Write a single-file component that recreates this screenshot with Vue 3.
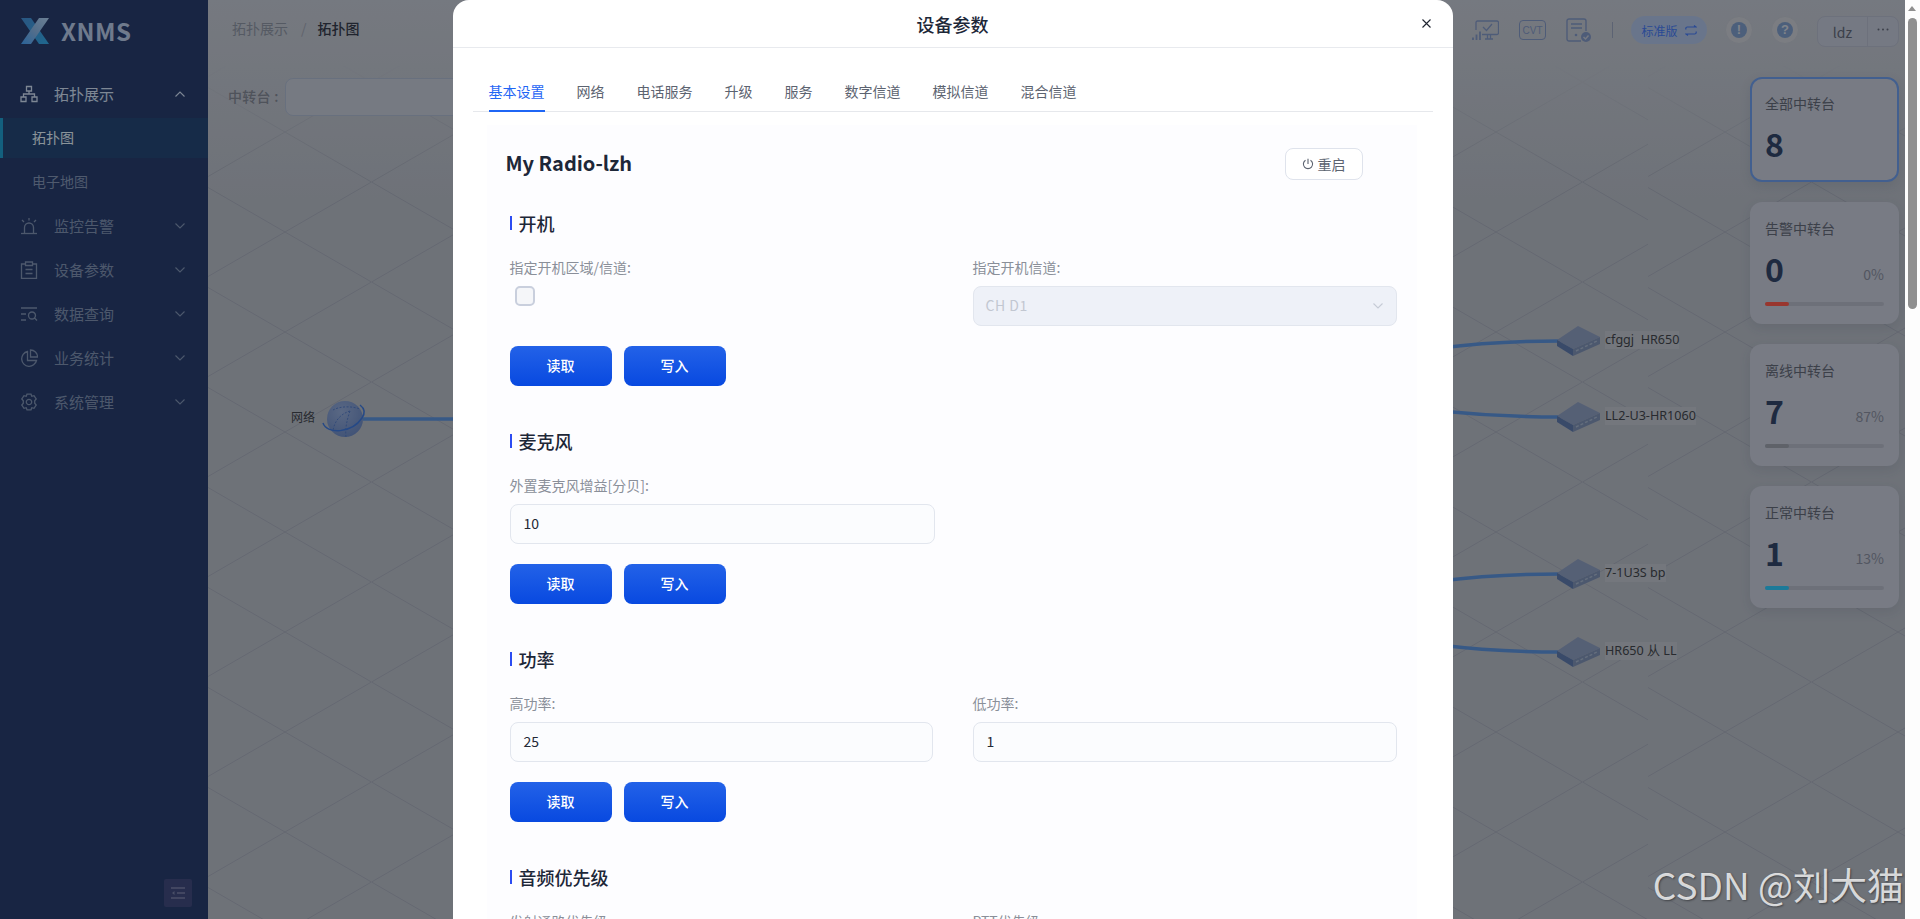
<template>
  <div class="app">
    <div class="page">
      <aside class="sidebar">
        <div class="logo">
          <svg width="28" height="26" viewBox="0 0 28 26">
            <defs>
              <linearGradient id="logoA" x1="0" y1="0" x2="1" y2="1">
                <stop offset="0" stop-color="#4690d8" />
                <stop offset="1" stop-color="#35adee" />
              </linearGradient>
              <linearGradient id="logoB" x1="1" y1="0" x2="0" y2="1">
                <stop offset="0" stop-color="#b2d4f7" />
                <stop offset="0.5" stop-color="#8ab8e8" />
                <stop offset="1" stop-color="#46a5ff" />
              </linearGradient>
            </defs>
            <polygon points="0,0 10,0 28,26 18,26" fill="url(#logoA)" />
            <polygon points="18,0 28,0 10,26 0,26" fill="url(#logoB)" />
          </svg>
          <span class="logo-text">XNMS</span>
        </div>
        <nav class="menu">
          <template v-for="item in menu" :key="item.name">
            <div :class="['menu-item', item.open ? 'open' : '']">
              <svg class="menu-icon" width="18" height="18" viewBox="0 0 18 18" fill="none" stroke="currentColor" stroke-width="1.3">
                <path v-for="(d, i) in item.icon" :key="i" :d="d" />
              </svg>
              <span class="menu-name">{{ item.name }}</span>
              <svg class="chevron" width="10" height="6" viewBox="0 0 10 6" fill="none" stroke="currentColor" stroke-width="1.1">
                <path :d="item.open ? 'M0.5 5.5L5 1L9.5 5.5' : 'M0.5 0.5L5 5L9.5 0.5'" />
              </svg>
            </div>
            <template v-if="item.children">
              <div
                v-for="sub in item.children"
                :key="sub.name"
                :class="['sub-item', sub.active ? 'active' : '']"
              >
                {{ sub.name }}
              </div>
            </template>
          </template>
        </nav>
        <div class="collapse-btn">
          <svg width="14" height="12" viewBox="0 0 14 12" fill="none" stroke="currentColor" stroke-width="1.4">
            <path d="M0 1H14M6 6H14M0 11H14" />
            <path d="M3.5 4L1 6L3.5 8Z" fill="currentColor" stroke="none" />
          </svg>
        </div>
      </aside>

      <main class="main">
        <svg class="canvas" width="1697" height="919" viewBox="208 0 1697 919">
          <defs>
            <pattern id="gridA" patternUnits="userSpaceOnUse" x="285" y="182" width="173" height="100">
              <path d="M0 50L86.5 0L173 50L86.5 100Z" fill="none" stroke="#a8aebd" stroke-width="1" />
            </pattern>
            <pattern id="gridB" patternUnits="userSpaceOnUse" x="1725" y="182" width="173" height="100">
              <path d="M0 50L86.5 0L173 50L86.5 100Z" fill="none" stroke="#a8aebd" stroke-width="1" />
            </pattern>
            <linearGradient id="gridFade" x1="0" y1="0" x2="0" y2="1">
              <stop offset="0.07" stop-color="#fff" stop-opacity="0" />
              <stop offset="0.2" stop-color="#fff" stop-opacity="1" />
            </linearGradient>
            <mask id="gridMask">
              <rect x="208" y="0" width="1697" height="919" fill="url(#gridFade)" />
            </mask>
            <radialGradient id="globeFill" cx="0.4" cy="0.3" r="0.8">
              <stop offset="0" stop-color="#96aedc" />
              <stop offset="1" stop-color="#6a88c4" />
            </radialGradient>
          </defs>
          <g mask="url(#gridMask)">
            <rect x="208" y="0" width="1440" height="919" fill="url(#gridA)" />
            <rect x="1648" y="0" width="257" height="919" fill="url(#gridB)" />
          </g>

          <path d="M363 419H460" fill="none" stroke="#5c94e0" stroke-width="3.5" />
          <path
            v-for="link in links"
            :key="link"
            :d="link"
            fill="none"
            stroke="#5c94e0"
            stroke-width="3.5"
          />

          <g>
            <circle cx="345" cy="419" r="18" fill="url(#globeFill)" />
            <path d="M333 410C340 406 352 406 360 409M350 411C347 420 345 428 346 437M350 411C340 414 334 422 333 431" fill="none" stroke="#4f78c8" stroke-width="0.9" stroke-dasharray="2 1.5" />
            <path d="M323 423C327 435 352 433 362 418C366 412 364 408 360 405" fill="none" stroke="#3f7ae0" stroke-width="1.5" />
          </g>

          <g v-for="node in nodes" :key="node.name" :transform="`translate(0 ${node.y - 341})`">
            <polygon points="1557,340 1578,326 1600,337 1573,349" fill="#8ea0c4" />
            <polygon points="1573,349 1600,337 1600,344 1573,356" fill="#7f93b8" />
            <polygon points="1557,340 1573,349 1573,356 1557,346" fill="#5f7cb0" />
            <path d="M1576 351L1597 341" stroke="#a8b8d0" stroke-width="1.4" stroke-dasharray="3 2" />
          </g>
        </svg>

        <span class="node-label net-label">网络</span>
        <span
          v-for="node in nodes"
          :key="node.name"
          class="node-label"
          :style="{ top: node.y - 10 + 'px' }"
        >{{ node.name }}</span>

        <header class="topbar">
          <div class="crumbs">
            <span class="crumb">拓扑展示</span>
            <span class="crumb-sep">/</span>
            <span class="crumb current">拓扑图</span>
          </div>
          <div class="tools">
            <svg class="tool tool-monitor" width="27" height="21" viewBox="0 0 27 21" fill="none" stroke="currentColor" stroke-width="1.3">
              <path d="M4 10V2.5A1.5 1.5 0 0 1 5.5 1H25A1.5 1.5 0 0 1 26.500 2.500V13A1.5 1.500 0 0 1 25 14.500H10" />
              <path d="M11 7L14.500 10.500L20 4M13 19H21M15.500 15V19M18.500 15V19" />
              <path d="M1 17.500V20M4.500 14.500V20M8 11.500V20" stroke-width="1.800" />
            </svg>
            <div class="tool tool-cvt">CVT</div>
            <svg class="tool tool-doc" width="26" height="24" viewBox="0 0 26 24" fill="none" stroke="currentColor" stroke-width="1.4">
              <path d="M15 23H3A2 2 0 0 1 1 21V3A2 2 0 0 1 3 1H18A2 2 0 0 1 20 3V13" />
              <path d="M5 6H16M5 10H16" />
              <circle cx="10" cy="17" r="1.300" fill="currentColor" stroke="none" />
              <circle cx="20" cy="19" r="5" fill="currentColor" stroke="none" />
              <path d="M17.500 19L19.500 21L22.500 17.500" stroke="#c5ccd9" />
            </svg>
            <span class="tool-divider"></span>
            <div class="edition">
              <span>标准版</span>
              <svg width="12" height="11" viewBox="0 0 12 11" fill="none" stroke="currentColor" stroke-width="1.2">
                <path d="M0.800 4.500V3.500A1.500 1.500 0 0 1 2.300 2H11L9 0.500M11.200 6.500V7.500A1.500 1.500 0 0 1 9.700 9H1L3 10.500" />
              </svg>
            </div>
            <div class="round-btn"><span class="round-inner">!</span></div>
            <div class="round-btn"><span class="round-inner">?</span></div>
            <div class="user-group">
              <span class="user-name">ldz</span>
              <span class="user-more">
                <svg width="12" height="3" viewBox="0 0 12 3" fill="currentColor">
                  <circle cx="1.500" cy="1.500" r="1" />
                  <circle cx="6" cy="1.500" r="1" />
                  <circle cx="10.500" cy="1.500" r="1" />
                </svg>
              </span>
            </div>
          </div>
        </header>

        <div class="content">
          <div class="filter">
            <span class="filter-label">中转台 :</span>
            <div class="filter-input"></div>
          </div>
          <div class="stats">
            <div
              v-for="stat in stats"
              :key="stat.title"
              :class="['stat-card', stat.active ? 'active' : '']"
            >
              <div class="stat-title">{{ stat.title }}</div>
              <div class="stat-row">
                <span class="stat-num">{{ stat.count }}</span>
                <span v-if="stat.percent" class="stat-percent">{{ stat.percent }}</span>
              </div>
              <div v-if="stat.color" class="stat-track">
                <div class="stat-fill" :style="{ background: stat.color }"></div>
              </div>
            </div>
          </div>
        </div>
      </main>

      <div class="mask">
        <div class="modal">
          <div class="modal-head">
            <span class="modal-title">设备参数</span>
            <svg class="modal-close" width="9" height="9" viewBox="0 0 9 9" fill="none" stroke="#1f2430" stroke-width="1.100">
              <path d="M0.500 0.500L8.500 8.500M8.500 0.500L0.500 8.500" />
            </svg>
          </div>
          <div class="tabs">
            <span
              v-for="(tab, i) in tabs"
              :key="tab"
              :class="['tab', i === 0 ? 'active' : '']"
            >{{ tab }}</span>
          </div>
          <div class="panel">
            <div class="panel-head">
              <span class="device-name">My Radio-lzh</span>
              <button class="restart">
                <svg width="12" height="12" viewBox="0 0 12 12" fill="none" stroke="currentColor" stroke-width="1.100">
                  <path d="M6 0.800V6M3.500 2.200A4.600 4.600 0 1 0 8.500 2.200" />
                </svg>
                重启
              </button>
            </div>
            <section v-for="section in sections" :key="section.title" class="section">
              <div class="section-title"><i class="section-bar"></i>{{ section.title }}</div>
              <div class="fields">
                <div
                  v-for="field in section.fields"
                  :key="field.label"
                  :class="['field', field.wide ? 'wide' : '']"
                >
                  <div class="field-label">{{ field.label }}</div>
                  <div v-if="field.type === 'check'" class="check-wrap">
                    <span class="check"></span>
                  </div>
                  <div v-else-if="field.type === 'select'" class="box disabled">
                    <span class="box-text">{{ field.value }}</span>
                    <svg width="10" height="6" viewBox="0 0 10 6" fill="none" stroke="#c6cbd6" stroke-width="1.100">
                      <path d="M0.500 0.500L5 5L9.500 0.500" />
                    </svg>
                  </div>
                  <div v-else class="box"><span class="box-text">{{ field.value }}</span></div>
                </div>
              </div>
              <div class="actions">
                <button class="primary">读取</button>
                <button class="primary">写入</button>
              </div>
            </section>
          </div>
        </div>
      </div>

      <span class="watermark">CSDN @刘大猫</span>
    </div>

    <div class="scrollbar">
      <i class="scroll-arrow"></i>
      <i class="scroll-thumb"></i>
    </div>
  </div>
</template>

<script setup>
const menu = [
  {
    name: "拓扑展示",
    open: true,
    icon: ["M6.500 1.500H11.500V6H6.500Z", "M1 12H6V16.500H1Z", "M12 12H17V16.500H12Z", "M3.500 12V9H14.500V12M9 6V9"],
    children: [{ name: "拓扑图", active: true }, { name: "电子地图" }],
  },
  {
    name: "监控告警",
    icon: ["M4.500 16V10.500A4.500 4.500 0 0 1 13.500 10.500V16", "M1 16.500H17", "M9 1V3.500M2 3L4 5M16 3L14 5"],
  },
  {
    name: "设备参数",
    icon: ["M5 3H1.500V17.500H16.500V3H13", "M5.500 1H12.500V4.500H5.500Z", "M5.500 8.500H12.500M5.500 12.500H12.500"],
  },
  {
    name: "数据查询",
    icon: ["M1 3H17M1 9H6M1 15H6", "M8.500 10.500A3.500 3.500 0 1 0 15.500 10.500A3.500 3.500 0 1 0 8.500 10.500ZM14.500 13L17 15.500"],
  },
  {
    name: "业务统计",
    icon: ["M7.500 2.500A7.500 7.500 0 1 0 16.500 11.500H7.500Z", "M10.500 1V8H17.500A7 7 0 0 0 10.500 1Z"],
  },
  {
    name: "系统管理",
    icon: [
      "M7 1.200H11L11.800 3.300L14 2.700L16.200 6L14.700 7.700V10.300L16.200 12L14 15.300L11.800 14.700L11 16.800H7L6.200 14.700L4 15.300L1.800 12L3.300 10.300V7.700L1.800 6L4 2.700L6.200 3.300Z",
      "M9 6.300A2.700 2.700 0 1 0 9 11.700A2.700 2.700 0 1 0 9 6.300Z",
    ],
  },
];

const nodes = [
  { name: "cfggj  HR650", y: 341 },
  { name: "LL2-U3-HR1060", y: 417 },
  { name: "7-1U3S bp", y: 574 },
  { name: "HR650 从 LL", y: 652 },
];

const links = [
  "M1440 348C1480 343 1520 341 1560 341",
  "M1440 411C1480 415 1520 417 1560 417",
  "M1440 581C1480 576 1520 574 1560 574",
  "M1440 645C1480 650 1520 652 1560 652",
];

const stats = [
  { title: "全部中转台", count: 8, active: true },
  { title: "告警中转台", count: 0, percent: "0%", color: "#ff5a4d" },
  { title: "离线中转台", count: 7, percent: "87%", color: "#9ea3af" },
  { title: "正常中转台", count: 1, percent: "13%", color: "#30cbff" },
];

const tabs = ["基本设置", "网络", "电话服务", "升级", "服务", "数字信道", "模拟信道", "混合信道"];

const sections = [
  {
    title: "开机",
    fields: [
      { label: "指定开机区域/信道:", type: "check" },
      { label: "指定开机信道:", type: "select", value: "CH D1" },
    ],
  },
  {
    title: "麦克风",
    fields: [{ label: "外置麦克风增益[分贝]:", type: "input", value: "10", wide: true }],
  },
  {
    title: "功率",
    fields: [
      { label: "高功率:", type: "input", value: "25" },
      { label: "低功率:", type: "input", value: "1" },
    ],
  },
  {
    title: "音频优先级",
    fields: [
      { label: "发射通路优先级:", type: "input", value: "" },
      { label: "PTT优先级:", type: "input", value: "" },
    ],
  },
];
</script>

<style>
html,
body {
  margin: 0;
  height: 100%;
  overflow: hidden;
}
</style>

<style scoped>
* {
  box-sizing: border-box;
}

.app {
  display: flex;
  height: 919px;
  overflow: hidden;
  font-family: "Noto Sans CJK SC", "Noto Sans", sans-serif;
}

.page {
  position: relative;
  flex: 1;
  display: flex;
  min-width: 0;
  overflow: hidden;
}

.sidebar {
  position: relative;
  flex: 0 0 208px;
  background: #283f71;
}

.logo {
  display: flex;
  align-items: center;
  height: 62px;
  padding-left: 21px;
  gap: 12px;
}

.logo-text {
  font-size: 24px;
  font-weight: 700;
  letter-spacing: 0.5px;
  color: #b9cbe9;
  margin-bottom: 1px;
}

.menu {
  padding-top: 10px;
}

.menu-item {
  display: flex;
  align-items: center;
  height: 44px;
  padding-left: 20px;
  color: #8093b4;
  font-size: 15px;
}

.menu-item.open {
  color: #d2e1f7;
}

.menu-icon {
  flex: none;
}

.menu-name {
  margin-left: 16px;
  margin-bottom: 2px;
  flex: 1;
}

.chevron {
  margin-right: 23px;
}

.sub-item {
  display: flex;
  align-items: center;
  height: 44px;
  padding-left: 32px;
  padding-bottom: 2px;
  font-size: 14px;
  color: #8496b7;
}

.sub-item.active {
  height: 40px;
  margin: 2px 0;
  background: #264878;
  border-left: 3px solid #21a0d2;
  padding-left: 29px;
  color: #e6f7ff;
}

.collapse-btn {
  position: absolute;
  left: 164px;
  top: 879px;
  width: 28px;
  height: 28px;
  display: flex;
  align-items: center;
  justify-content: center;
  border-radius: 2px;
  background: #414b80;
  color: #7d85ad;
}

.main {
  position: relative;
  flex: 1;
  min-width: 0;
  background: linear-gradient(#c4cad5, #b8bec9 200px);
}

.canvas {
  position: absolute;
  left: 0;
  top: 0;
}

.node-label {
  position: absolute;
  left: 1397px;
  font-family: "Noto Sans", sans-serif;
  font-size: 12.600px;
  line-height: 18px;
  white-space: pre;
  color: #43474f;
  background: #c2c7d0;
}

.net-label {
  left: 83px;
  top: 408px;
  background: none;
  font-family: "Noto Sans CJK SC", sans-serif;
  font-size: 12px;
}

.topbar {
  position: relative;
  display: flex;
  align-items: center;
  justify-content: space-between;
  height: 60px;
  padding: 0 6px 0 24px;
}

.crumbs {
  display: flex;
  align-items: center;
  font-size: 14px;
  margin-top: -5px;
}

.crumb {
  color: #8e96a5;
}

.crumb.current {
  color: #363c4d;
  font-weight: 500;
}

.crumb-sep {
  margin: 0 11px 0 13px;
  color: #a0a6b4;
}

.tools {
  display: flex;
  align-items: center;
  gap: 18px;
  color: #8399c8;
}

.tool {
  flex: none;
  margin-right: 2px;
}

.tool-cvt {
  display: flex;
  align-items: center;
  justify-content: center;
  width: 27px;
  height: 20px;
  border: 1.5px solid currentColor;
  border-radius: 4px;
  font-family: "Liberation Sans", sans-serif;
  font-size: 10px;
}

.tool-divider {
  width: 1px;
  height: 16px;
  background: #9aa6c0;
}

.edition {
  display: flex;
  align-items: center;
  justify-content: center;
  gap: 7px;
  width: 76px;
  height: 28px;
  border-radius: 14px;
  background: #b0c4e8;
  color: #467bf7;
  font-size: 12px;
}

.round-btn {
  display: flex;
  align-items: center;
  justify-content: center;
  width: 28px;
  height: 28px;
  border-radius: 50%;
  background: #cdd1d9;
  border: 1px solid #c2c7d2;
}

.round-inner {
  width: 16px;
  height: 16px;
  border-radius: 50%;
  background: #7f9fce;
  color: #d5dbe6;
  font-family: "Liberation Sans", sans-serif;
  font-size: 13px;
  font-weight: 700;
  line-height: 16px;
  text-align: center;
}

.user-group {
  display: flex;
  height: 31px;
  width: 82px;
  margin-top: 2px;
  border: 1px solid #b6bccf;
  border-radius: 8px;
  background: #c3cada;
  color: #646b7c;
}

.user-name {
  flex: 0 0 50px;
  border-right: 1px solid #b6bccf;
  text-align: center;
  font-size: 14px;
  line-height: 31px;
}

.user-more {
  flex: 1;
  display: flex;
  align-items: center;
  justify-content: center;
  padding-bottom: 4px;
}

.content {
  position: relative;
  display: flex;
  justify-content: space-between;
  padding: 17px 6px 0 20px;
}

.filter {
  display: flex;
  align-items: flex-start;
  margin-top: 1px;
}

.filter-label {
  font-size: 14px;
  font-weight: 500;
  line-height: 36px;
  color: #848a98;
  letter-spacing: 0.3px;
}

.filter-input {
  width: 300px;
  height: 38px;
  margin-left: 6px;
  border: 1px solid #aebbd2;
  border-radius: 8px;
  background: #c5ccd9;
}

.stats {
  display: flex;
  flex-direction: column;
  gap: 20px;
  width: 149px;
}

.stat-card {
  padding: 15px 13px 16px;
  border: 2px solid transparent;
  border-radius: 12px;
  background: #c8cddc;
  box-shadow: 0 4px 12px rgba(60, 70, 100, 0.12);
}

.stat-card.active {
  border-color: #6f9fee;
  padding-bottom: 17px;
}

.stat-title {
  height: 20px;
  font-size: 14px;
  line-height: 18px;
  color: #656b7a;
}

.stat-row {
  display: flex;
  align-items: flex-start;
  justify-content: space-between;
  margin-top: 13px;
  height: 36px;
}

.stat-num {
  font-size: 32px;
  font-weight: 700;
  line-height: 32px;
  color: #32466b;
}

.stat-percent {
  font-size: 14px;
  line-height: 28px;
  margin-top: 8px;
  color: #8a90a2;
}

.stat-track {
  height: 4px;
  margin-top: 14px;
  border-radius: 2px;
  background: #b6bbca;
}

.stat-fill {
  width: 24px;
  height: 4px;
  border-radius: 2px;
}

.mask {
  position: absolute;
  inset: 0;
  display: flex;
  justify-content: center;
  background: rgba(0, 0, 0, 0.4);
}

.modal {
  flex: 0 0 1000px;
  height: 1200px;
  border-radius: 16px 16px 0 0;
  background: #fff;
}

.modal-head {
  position: relative;
  height: 48px;
  border-bottom: 1px solid #e8eaee;
  text-align: center;
}

.modal-title {
  font-size: 18px;
  font-weight: 500;
  line-height: 48px;
  color: #1d2738;
}

.modal-close {
  position: absolute;
  right: 22px;
  top: 19px;
}

.tabs {
  display: flex;
  gap: 32px;
  height: 40px;
  margin: 24px 20px 0;
  padding-left: 16px;
  border-bottom: 1px solid #e6e8ec;
}

.tab {
  height: 40px;
  font-size: 14px;
  line-height: 38px;
  color: #5c6370;
}

.tab.active {
  color: #1f66f5;
  border-bottom: 2px solid #1f66f5;
}

.panel {
  margin: 13px 36px 0 34px;
  padding: 23px 20px 0 23px;
  background: #fdfdff;
}

.panel-head {
  display: flex;
  align-items: center;
  justify-content: space-between;
  height: 32px;
  margin-left: -4px;
  margin-right: 34px;
}

.device-name {
  font-size: 20px;
  font-weight: 700;
  line-height: 28px;
  margin-bottom: 3px;
  color: #1d2738;
}

.restart {
  display: flex;
  align-items: center;
  justify-content: center;
  gap: 4px;
  width: 78px;
  height: 32px;
  padding: 0;
  border: 1px solid #dfe3ec;
  border-radius: 8px;
  background: #fff;
  color: #5c6370;
  font-family: inherit;
  font-size: 14px;
}

.section {
  margin-bottom: 43px;
}

.panel-head + .section {
  margin-top: 31px;
}

.section-title {
  display: flex;
  align-items: center;
  gap: 7px;
  height: 24px;
  font-size: 18px;
  font-weight: 500;
  color: #1d2738;
}

.section-bar {
  width: 2px;
  height: 14px;
  background: #2c4cf2;
}

.fields {
  display: grid;
  grid-template-columns: 423px 424px;
  column-gap: 40px;
  margin-top: 21px;
}

.field-label {
  height: 24px;
  margin-bottom: 6px;
  font-size: 14px;
  line-height: 22px;
  color: #8a8f99;
}

.check-wrap {
  height: 40px;
  padding-left: 5px;
}

.check {
  display: block;
  width: 20px;
  height: 20px;
  border: 2px solid #c9cfdd;
  border-radius: 5px;
  background: #f5f6f9;
}

.box {
  display: flex;
  align-items: center;
  justify-content: space-between;
  height: 40px;
  padding: 0 13px;
  border: 1px solid #e2e6ee;
  border-radius: 8px;
  background: #fbfcfe;
  font-size: 14px;
  color: #232936;
}

.field.wide .box {
  width: 425px;
}

.box-text {
  margin-bottom: 2px;
}

.box.disabled {
  padding-left: 12px;
  background: #eef1f8;
  color: #c2c7d1;
  letter-spacing: 0.5px;
}

.actions {
  display: flex;
  gap: 12px;
  margin-top: 20px;
}

.primary {
  width: 102px;
  height: 40px;
  padding: 0 0 2px;
  border: none;
  border-radius: 8px;
  background: linear-gradient(#2362e8, #0849e0);
  color: #fff;
  font-family: inherit;
  font-size: 14px;
  font-weight: 500;
}

.watermark {
  position: absolute;
  right: 1px;
  top: 857px;
  font-size: 37px;
  line-height: 54px;
  white-space: nowrap;
  color: rgba(255, 255, 255, 0.78);
  text-shadow: 1px 1px 2px rgba(0, 0, 0, 0.4);
}

.scrollbar {
  position: relative;
  flex: 0 0 15px;
  background: #fdfdfd;
}

.scroll-arrow {
  position: absolute;
  left: 3px;
  top: 6px;
  border-left: 4.500px solid transparent;
  border-right: 4.500px solid transparent;
  border-bottom: 5px solid #8f8f8f;
}

.scroll-thumb {
  position: absolute;
  left: 3px;
  top: 18px;
  width: 9px;
  height: 291px;
  border-radius: 5px;
  background: #8f8f8f;
}
</style>
